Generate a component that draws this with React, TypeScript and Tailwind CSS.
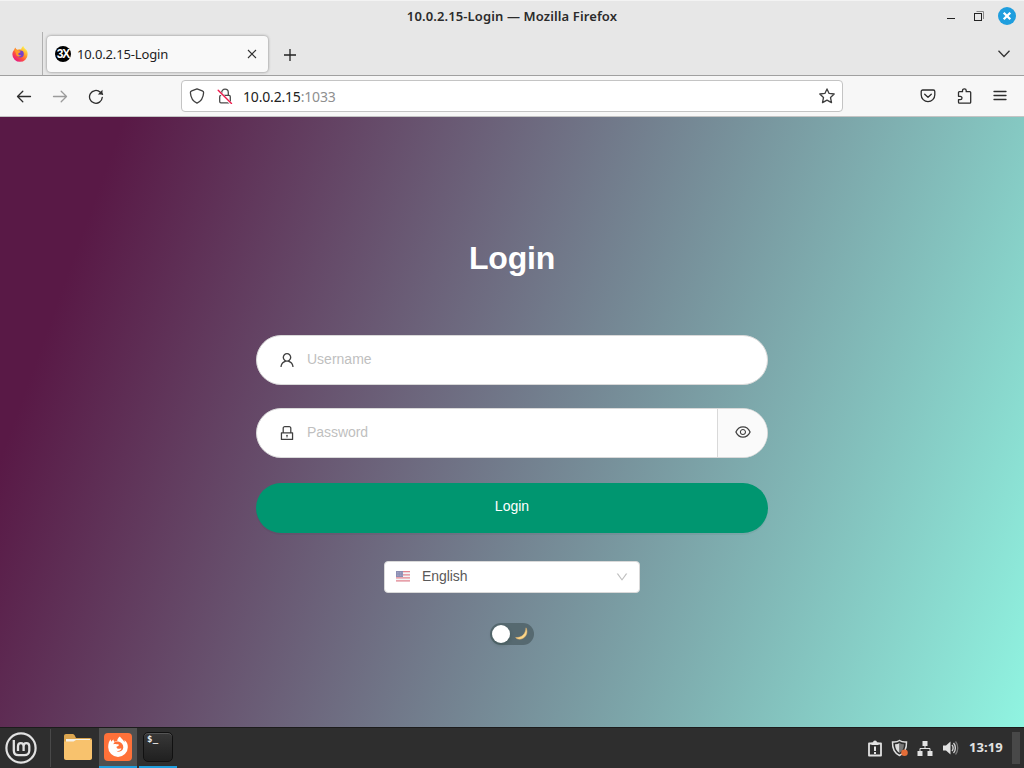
import type { ReactNode } from 'react'
import { AiOutlineDown, AiOutlineEye, AiOutlineLock, AiOutlineUser } from 'react-icons/ai'

const FirefoxLogo = () => (
  <svg className="block h-4 w-4" viewBox="0 0 16 16">
    <defs>
      <linearGradient id="fx" x1="0.85" y1="0.1" x2="0.2" y2="0.95">
        <stop offset="0" stopColor="#fff44f" />
        <stop offset="0.35" stopColor="#ffa42a" />
        <stop offset="0.65" stopColor="#ff4f3e" />
        <stop offset="1" stopColor="#e31587" />
      </linearGradient>
    </defs>
    <path
      d="M15.4 6C15 4.6 14 3.500 13.300 3.100C12.600 2.400 11.800 1.500 11.300 0C10 .9 9.300 2.400 9.200 3.500C7.600 3 6.300 3.200 5.300 3.700L4.500 3.200C3.800 2.900 3.800 2.200 3.700 1.500C2.900 2 2.300 3 2.200 3.700C1.200 4.800.4 6.400.4 8.400A7.600 7.400 0 0 0 15.600 8.400C15.600 7.500 15.600 6.800 15.400 6Z"
      fill="url(#fx)"
    />
    <circle cx="8.400" cy="8" r="3.400" fill="#7641c9" />
    <path
      d="M2.400 4.200C4 3.500 5.500 4 6.300 5C7.500 4.900 8.500 5.300 8.700 5.900C8 6.700 6.600 6.600 6.200 7.700C6.400 9 8 9.700 9.300 9.100C8.300 11 5.700 11 4.500 9.200C3.900 8.200 3.900 6 2.400 4.200Z"
      fill="#ff9a2b"
    />
  </svg>
)

const TitleBar = () => (
  <div className="grid h-8 grid-cols-[1fr_auto_1fr] items-center border-t border-[#f3f3f3] text-[#2b2b2b]">
    <span />
    <span className="pb-0.5 text-[13px] font-semibold leading-4 tracking-[0.12px]">
      10.0.2.15-Login — Mozilla Firefox
    </span>
    <div className="flex items-center justify-end pb-px pr-2">
      <svg className="h-[18px] w-[52px]" viewBox="0 0 52 18" fill="none">
        <path d="M7 11.500H15" stroke="#222" />
        <path d="M36.500 4.500H43.500V12" stroke="#888" />
        <rect x="34.500" y="6.500" width="7" height="7" stroke="#222" />
      </svg>
      <svg className="ml-[6px] h-[18px] w-[18px]" viewBox="0 0 18 18">
        <circle cx="9" cy="9" r="9" fill="#1f9ede" />
        <path d="M5.700 5.700L12.300 12.300M12.300 5.700L5.700 12.300" stroke="#fff" strokeWidth="2.300" />
      </svg>
    </div>
  </div>
)

const TabBar = () => (
  <div className="flex h-[44px] border-b border-[#a0a0a0]">
    <div className="flex w-[43px] items-center justify-center border-r border-[#b0b0b0] pr-[3px]">
      <FirefoxLogo />
    </div>
    <div className="mb-[3px] ml-[4px] mt-[4px] flex w-[221px] items-center rounded-[4px] bg-[#f9f9f9] px-2 shadow-[0_0_3px_rgba(0,0,0,0.45)]">
      <span className="flex h-4 w-4 items-center justify-center rounded-full bg-black font-['Liberation_Sans'] text-[12px] font-bold tracking-[-1px] text-white">
        3X
      </span>
      <span className="ml-[6px] flex-1 text-[13px] leading-4 tracking-[-0.14px] text-[#222]">
        10.0.2.15-Login
      </span>
      <svg className="mr-[3px] h-[10px] w-[10px]" viewBox="0 0 10 10">
        <path d="M1 1L9 9M9 1L1 9" stroke="#333" strokeWidth="1.100" />
      </svg>
    </div>
    <svg className="ml-[15px] mt-4 h-[14px] w-[14px]" viewBox="0 0 14 14">
      <path d="M7 1V13M1 7H13" stroke="#222" strokeWidth="1.300" />
    </svg>
    <svg className="ml-auto mr-[13px] mt-4 h-3 w-[14px]" viewBox="0 0 14 12" fill="none">
      <path d="M1.500 2.800L7 8.500L12.500 2.800" stroke="#333" strokeWidth="1.300" />
    </svg>
  </div>
)

const ToolIcon = ({ children, className }: { children: ReactNode; className?: string }) => (
  <svg
    className={`h-4 w-4 shrink-0 ${className ?? ''}`}
    viewBox="0 0 16 16"
    fill="none"
    stroke="#2d2d2d"
    strokeWidth="1.300"
    strokeLinecap="round"
    strokeLinejoin="round"
  >
    {children}
  </svg>
)

const NavBar = () => (
  <div className="flex h-[41px] items-center border-b border-[#c4c4c4] bg-[#f7f7f7] pl-4">
    <ToolIcon>
      <path d="M14.500 8.500H1.500M6.800 3.300L1.500 8.500L6.800 13.700" />
    </ToolIcon>
    <ToolIcon className="ml-5 opacity-45">
      <path d="M1.500 8.500H14.500M9.200 3.300L14.500 8.500L9.200 13.700" />
    </ToolIcon>
    <ToolIcon className="ml-5">
      <path d="M14.300 9.300A6.400 6.400 0 1 1 12.300 4.200L14.500 6.200" />
      <path d="M14.500 1.800V6.500H9.800Z" fill="#2d2d2d" stroke="none" />
    </ToolIcon>
    <div className="ml-[77px] flex h-8 w-[662px] items-center rounded-[4px] border border-[#c4c4c4] bg-white pl-[7px] pr-[7px]">
      <ToolIcon>
        <path d="M8 .8L13.300 2.800C14.300 3.200 14.700 3.800 14.600 4.800C14.300 9.400 12 13.400 8 15.100C4 13.400 1.700 9.400 1.400 4.800C1.300 3.800 1.700 3.200 2.700 2.800Z" stroke="#3f3f3f" />
      </ToolIcon>
      <ToolIcon className="ml-3">
        <path d="M4.700 7.200V4.500C4.700 2.600 6.100 1.200 8 1.200S11.300 2.600 11.300 4.500V7.200" stroke="#4a4a4a" />
        <rect x="2.700" y="7.400" width="10.600" height="7.500" rx="1.300" stroke="#4a4a4a" />
        <path d="M1.200 2.800L14.200 15.800" stroke="white" strokeWidth="2.400" />
        <path d="M1.200 2.200L14.500 15.400" stroke="#f0194b" strokeWidth="1.400" />
      </ToolIcon>
      <span className="ml-[10px] flex-1 pt-px text-[14px] leading-5 tracking-[-0.18px] text-[#222]">
        10.0.2.15<span className="text-[#8f8f8f]">:1033</span>
      </span>
      <ToolIcon>
        <path d="M8 .9L10.100 5.400L15.200 6L11.500 9.500L12.500 14.600L8 12.100L3.500 14.600L4.500 9.500L.8 6L5.900 5.400Z" stroke="#3f3f3f" />
      </ToolIcon>
    </div>
    <ToolIcon className="ml-[77px]">
      <path d="M2.700 2H13.300C14.200 2 14.800 2.600 14.800 3.500V6.800A6.800 6.800 0 0 1 1.200 6.800V3.500C1.200 2.600 1.800 2 2.700 2Z" />
      <path d="M4.700 6.200L8 9.300L11.300 6.200" />
    </ToolIcon>
    <ToolIcon className="ml-5">
      <path d="M2.500 7V4.600C2.500 4 2.800 3.700 3.400 3.700H6.500V2.500C6.500 .2 10.200 .2 10.200 2.500V3.700H13.800C14.400 3.700 14.700 4 14.700 4.600V14.300C14.700 14.900 14.400 15.200 13.800 15.200H3.400C2.800 15.200 2.500 14.900 2.500 14.300V11.700H4.200C6.600 11.700 6.600 8.300 4.200 8.300H2.500V7" />
    </ToolIcon>
    <ToolIcon className="ml-5">
      <path d="M2 3.500H14M2 7.500H14M2 11.500H14" strokeWidth="1.300" />
    </ToolIcon>
  </div>
)

const UsFlag = () => (
  <svg className="mb-0.5 h-[11px] w-[14px]" viewBox="0 0 14 11" opacity="0.6">
    <rect width="14" height="11" rx="1" fill="#eceff1" />
    <path d="M0 .7H14M0 3.800H14M0 6.800H14M0 9.800H14" stroke="#d3374a" strokeWidth="1.300" />
    <rect width="7" height="6" fill="#3f4382" />
    <path d="M1 1.500H6.500M1 3H6.500M1 4.500H6.500" stroke="#aeb2d0" strokeWidth=".5" strokeDasharray=".6 1" />
  </svg>
)

const LoginPage = () => (
  <main className="flex h-[610px] flex-col items-center bg-[linear-gradient(110deg,#591946_10%,#90f4e1_100%)] font-['Liberation_Sans',sans-serif] text-[14px]">
    <h1 className="mt-[121px] text-[32px] font-bold leading-10 tracking-[-0.2px] text-white">Login</h1>

    <div className="mt-[57px] flex h-[50px] w-[512px] items-center rounded-[30px] border border-[#d9d9d9] bg-white pl-[21px]">
      <AiOutlineUser className="h-[18px] w-[18px] text-[#404040]" />
      <span className="ml-[11px] pb-0.5 text-[#bfbfbf]">Username</span>
    </div>

    <div className="mt-[23px] flex h-[50px] w-[512px] overflow-hidden rounded-[30px] border border-[#d9d9d9] bg-white">
      <div className="flex flex-1 items-center pl-[21px]">
        <AiOutlineLock className="h-[18px] w-[18px] text-[#404040]" />
        <span className="ml-[11px] pb-0.5 tracking-[-0.05px] text-[#bfbfbf]">Password</span>
      </div>
      <div className="flex w-[50px] items-center justify-center border-l border-[#d9d9d9] bg-[#fafafa] pb-0.5">
        <AiOutlineEye className="h-[18px] w-[18px] text-[#404040]" />
      </div>
    </div>

    <button className="mt-[25px] h-[50px] w-[512px] rounded-[30px] bg-[#009670] pb-1 text-white shadow-[0_2px_0_rgba(0,0,0,0.045)]">
      Login
    </button>

    <div className="mt-[28px] flex h-8 w-[256px] items-center rounded-[4px] border border-[#d9d9d9] bg-white pl-[11px] pr-[10px]">
      <UsFlag />
      <span className="ml-[12px] flex-1 pb-0.5 tracking-[-0.08px] text-[#595959]">English</span>
      <AiOutlineDown className="h-[14px] w-[14px] text-[#bfbfbf]" />
    </div>

    <div className="mt-[30px] flex h-[22px] w-[44px] items-center rounded-full bg-[#566970] pl-0.5">
      <span className="h-[18px] w-[18px] rounded-full bg-white shadow-[0_2px_4px_rgba(0,35,11,0.2)]" />
      <svg className="mb-0.5 ml-[5px] h-[13px] w-[13px]" viewBox="0 0 13 13">
        <path d="M11 .8C13.800 6 10.200 12.200 4.500 12.200C3 12.200 1.500 11.600 .6 10.500C6.500 11 10.800 7 11 .8Z" fill="#fdd888" stroke="#e2b270" strokeWidth=".5" />
      </svg>
    </div>
  </main>
)

const Taskbar = () => (
  <footer className="flex h-[41px] items-center border-t border-[#1c1c1c] bg-[#2e2e2e]">
    <svg className="ml-[5px] h-8 w-8" viewBox="0 0 32 32" fill="none" stroke="#e2e2e2">
      <circle cx="16" cy="16" r="14.600" strokeWidth="2.200" />
      <path d="M8.800 8V18.500C8.800 21.500 10.800 23.200 13.500 23.200H19.500C22.300 23.200 24.300 21.300 24.300 18.500V14.300C24.300 12.400 22.900 11.100 21.300 11.100S18.600 12.400 18.600 14.300V19M18.600 14.300C18.600 12.400 17.300 11.100 15.800 11.100S13 12.400 13 14.300V19" strokeWidth="2.300" />
    </svg>
    <div className="ml-[13px] h-[38px] w-px bg-[#494949]" />
    <svg className="mb-0.5 ml-[13px] h-[26px] w-7" viewBox="0 0 28 26">
      <path d="M0 2C0 .8.8 0 2 0H8.800C10 0 10.500 1 11 2L12 4H26C27.200 4 28 4.800 28 6V20H0Z" fill="#dca650" />
      <path d="M2 5H26V10H2Z" fill="#f5f1e8" />
      <path d="M0 7.500H9.500L12 6H28V24C28 25.200 27.200 26 26 26H2C.8 26 0 25.200 0 24Z" fill="#f8c26d" />
    </svg>
    <div className="ml-[7px] flex h-10 w-[38px] flex-col items-center border-b-2 border-[#1f9ede] bg-[#505050] pt-[3px]">
      <svg className="mt-0.5 h-7 w-7" viewBox="0 0 28 28">
        <rect width="28" height="28" rx="4" fill="#ff7139" />
        <path d="M23.300 10.800C22.600 9 21.500 7.900 20.400 7.100C20.600 7.700 20.700 8.500 20.500 9.200C19.500 6.900 17.300 5.700 15.900 3.500C13.900 4.600 13.300 6.600 13.300 8C12.200 8.100 11.300 8.500 10.600 8.900C9.700 8.300 9.500 7.500 9.600 6.600C8.700 7 8.100 7.800 7.700 8.600C6.900 8.200 6.700 7.200 6.700 6.300C5 8 4.200 10.900 4.200 14.200A9.800 9.700 0 0 0 23.800 14.200C23.800 13 23.700 11.800 23.300 10.800Z" fill="#fff" />
        <path d="M9.500 11.300C10.500 10.800 11.800 10.900 12.500 11.300C12.900 11.300 14.800 11.400 15 11.900C14.900 12.700 13.300 13.200 12.500 13.800C12.300 15.600 14.500 16.300 16.300 15.500C17 15.200 17.600 15.500 17.300 16.100C16 18.300 13.500 18.200 12 17.400C14.500 19.900 19 18.500 19.300 14.600C19.500 11.600 17.400 9.500 15 8.700C13.200 8 11.100 8.500 10 9.800C9.700 10.200 9.500 10.700 9.500 11.300Z" fill="#ff7139" />
      </svg>
    </div>
    <div className="ml-0.5 flex h-10 w-[38px] flex-col items-center border-b-2 border-[#1f9ede] pt-1">
      <div className="h-[30px] w-[30px] rounded-[5px] border border-[#111] bg-linear-to-b from-[#383838] to-[#202020] pl-[3px] pt-0.5 font-['DejaVu_Sans_Mono'] text-[9px] font-bold leading-[9px] tracking-[0.4px] text-[#eee] shadow-[inset_0_1px_0_#555]">
        $_
      </div>
    </div>

    <div className="ml-auto flex h-full items-center">
      <svg className="h-[17px] w-4" viewBox="0 0 16 17">
        <path d="M2 3.500H14V15.500H2Z" fill="none" stroke="#e2e2e2" strokeWidth="1.800" strokeLinejoin="round" />
        <path d="M4.500 3V2.500H6A2 2 0 0 1 10 2.500H11.500V5H4.500Z" fill="#e2e2e2" />
        <path d="M8 6.500V11M8 12V14" stroke="#e2e2e2" strokeWidth="2" />
      </svg>
      <svg className="ml-2 h-[18px] w-[17px]" viewBox="0 0 17 18">
        <path d="M8.500 1.500C6.500 3 4 3.300 1.500 3C1.300 9 3 14 8.500 16.500C14 14 15.700 9 15.500 3C13 3.300 10.500 3 8.500 1.500Z" fill="none" stroke="#dedede" strokeWidth="1.500" />
        <path d="M8.500 4C7 5 5.500 5.300 4 5.200C4.200 9 5.200 12 8.500 14Z" fill="#ddd" />
        <path d="M8.500 4C10 5 11.500 5.300 13 5.200C12.800 9 11.800 12 8.500 14Z" fill="#777" />
        <circle cx="13.500" cy="13.800" r="3.300" fill="#e36d38" />
      </svg>
      <svg className="ml-[9px] h-4 w-4" viewBox="0 0 16 16" fill="#e2e2e2">
        <path d="M5.500 1H10.500V6H5.500ZM.5 11H5.500V16H.5ZM10.500 11H15.500V16H10.500Z" />
        <path d="M8 6V8.500M3 11V8.500H13V11" fill="none" stroke="#e2e2e2" />
      </svg>
      <svg className="ml-[10px] h-4 w-4" viewBox="0 0 16 16" fill="none">
        <path d="M0 5.500H3L7.500 1.500V14.500L3 10.500H0Z" fill="#e2e2e2" />
        <path d="M9 5C10.500 6.500 10.500 9.500 9 11M10.500 3C13 5.500 13 10.500 10.500 13" stroke="#d5d5d5" strokeWidth="1.400" />
        <path d="M12.500 1.500C15.500 5 15.500 11 12.500 14.500" stroke="#777" strokeWidth="1.300" />
      </svg>
      <span className="ml-[10px] w-[35px] whitespace-nowrap text-[13px] font-bold tracking-[0.05px] text-[#e2e2e2]">13:19</span>
      <div className="ml-2 mr-1 h-8 w-2 bg-[#484848]" />
    </div>
  </footer>
)

const App = () => (
  <div className="flex h-[768px] w-[1024px] flex-col overflow-hidden bg-[#e7e7e7] font-['Noto_Sans',sans-serif]">
    <TitleBar />
    <TabBar />
    <NavBar />
    <LoginPage />
    <Taskbar />
  </div>
)

export default App
